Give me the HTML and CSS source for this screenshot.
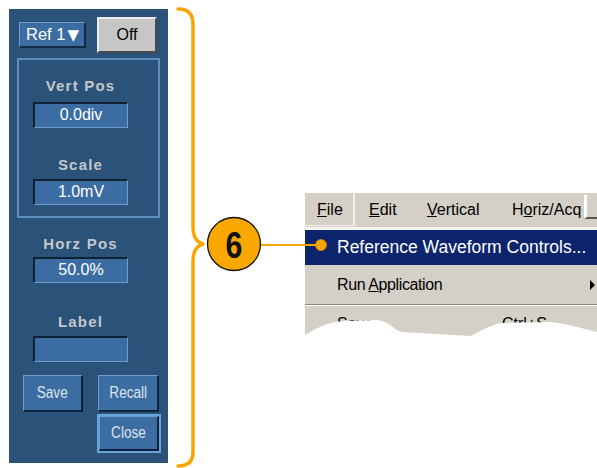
FILE: index.html
```html
<!DOCTYPE html>
<html lang="en">
<head>
    <meta charset="UTF-8">
    <title>Reference Waveform Controls</title>
    <link rel="stylesheet" href="styles.css">
</head>
<body>

<div class="page">
    <!-- Ref waveform side panel -->
    <div class="panel">
        <div class="top-row">
            <div class="ref-btn">Ref 1<span class="ref-arrow">▼</span></div>
            <div class="off-btn">Off</div>
        </div>

        <div class="group">
            <div class="field-label">Vert Pos</div>
            <div class="value-box">0.0div</div>
            <div class="field-label scale-label">Scale</div>
            <div class="value-box scale-box">1.0mV</div>
        </div>

        <div class="field-label horz-label">Horz Pos</div>
        <div class="value-box horz-box">50.0%</div>

        <div class="field-label name-label">Label</div>
        <div class="value-box name-box"></div>

        <div class="btn-row">
            <div class="blue-btn"><span>Save</span></div>
            <div class="blue-btn recall"><span>Recall</span></div>
        </div>
        <div class="close-ring">
            <div class="blue-btn close"><span>Close</span></div>
        </div>
    </div>

    <!-- brace + callout -->
    <svg class="callout" width="137" height="468" viewBox="0 0 137 468">
        <path d="M10 9 C19 9 25 13 25 24 L25 226 C25 238 29 243 36 244 C29 245 25 250 25 262 L25 452 C25 462 19 466 10 466"
              fill="none" stroke="#f7a600" stroke-width="3.5" stroke-linecap="round"/>
        <line x1="92" y1="245" x2="137" y2="245" stroke="#f7a600" stroke-width="2"/>
        <circle cx="66" cy="244" r="26.5" fill="#f9a800" stroke="#111" stroke-width="1.3"/>
        <text x="66" y="258" text-anchor="middle" class="step-num" transform="translate(66 0) scale(0.82 1) translate(-66 0)">6</text>
    </svg>

    <!-- menu screenshot -->
    <div class="menu-shot">
        <div class="menubar">
            <div class="menu-item file"><u>F</u>ile</div>
            <div class="menu-item edit"><u>E</u>dit</div>
            <div class="menu-item vert"><u>V</u>ertical</div>
            <div class="menu-item horiz">H<u>o</u>riz/Acq</div>
            <div class="menu-edge"></div>
        </div>
        <div class="dropdown">
            <div class="dd-row active">Reference Waveform Controls...</div>
            <div class="dd-row run">Run <u>A</u>pplication<span class="sub-arrow"></span></div>
            <div class="dd-sep"></div>
            <div class="dd-row save">Save<span class="shortcut">Ctrl+S</span></div>
        </div>

        <svg class="dot" width="30" height="14" viewBox="0 0 30 14">
            <line x1="0" y1="7" x2="16" y2="7" stroke="#f7a600" stroke-width="2"/>
            <circle cx="16" cy="7" r="5.5" fill="#f7a600" stroke="#e08a00" stroke-width="0.8"/>
        </svg>

        <svg class="torn" width="292" height="26" viewBox="0 0 292 26">
            <path d="M0 23 C10 17 22 10 38 9 L72 8 C84 9 88 17 96 20 L166 24 C172 21 182 14 196 11 L246 10 C262 12 276 16 292 20 L292 26 L0 26 Z" fill="#fff"/>
        </svg>
    </div>
</div>

</body>
</html>
```

FILE: styles.css
```css
body {
    margin: 0;
    background-color: #fff;
    font-family: "Liberation Sans", Arial, sans-serif;
}
.page {
    display: flex;
    align-items: flex-start;
    width: 597px;
    height: 468px;
    overflow: hidden;
}

/* side panel */
.panel {
    width: 159px;
    height: 454px;
    margin: 9px 0 0 9px;
    padding: 8px 0 0 8px;
    box-sizing: border-box;
    background-color: #2b5279;
    flex-shrink: 0;
}
.top-row {
    display: flex;
    align-items: center;
    height: 36px;
}
.ref-btn {
    margin-left: 2px;
    width: 67px;
    height: 26px;
    box-sizing: border-box;
    background-color: #3b6ca2;
    border-top: 1px solid #6f9ccc;
    border-left: 1px solid #6f9ccc;
    border-right: 2px solid #142a42;
    border-bottom: 2px solid #142a42;
    color: #fff;
    font-size: 16.5px;
    line-height: 23px;
    padding-left: 6px;
    white-space: nowrap;
}
.ref-arrow {
    font-family: "DejaVu Sans", sans-serif;
    font-size: 15px;
    margin-left: 2px;
}
.off-btn {
    margin-left: 11px;
    width: 60px;
    height: 36px;
    box-sizing: border-box;
    background-color: #c6c6c6;
    border-top: 2px solid #ececec;
    border-left: 2px solid #ececec;
    border-right: 2px solid #4a4a4a;
    border-bottom: 2px solid #4a4a4a;
    color: #000;
    font-size: 16px;
    line-height: 32px;
    text-align: center;
}
.group {
    margin-top: 5px;
    width: 143px;
    height: 160px;
    box-sizing: border-box;
    border: 2px solid #5c8ec2;
    padding: 18px 0 0 14px;
}
.field-label {
    width: 95px;
    height: 16px;
    line-height: 16px;
    text-align: center;
    font-size: 15px;
    font-weight: bold;
    letter-spacing: 1.2px;
    color: #c3c7cb;
}
.value-box {
    width: 95px;
    height: 26px;
    box-sizing: border-box;
    margin-top: 8px;
    background-color: #3b6ca2;
    border-top: 2px solid #0f2134;
    border-left: 2px solid #0f2134;
    border-right: 1px solid #6f9ccc;
    border-bottom: 1px solid #6f9ccc;
    color: #fff;
    font-size: 16px;
    line-height: 22px;
    text-align: center;
}
.scale-label {
    margin-top: 29px;
}
.scale-box {
    margin-top: 6px;
}
.horz-label,
.horz-box,
.name-label,
.name-box {
    margin-left: 16px;
}
.horz-label {
    margin-top: 18px;
}
.horz-box {
    margin-top: 5px;
}
.name-label {
    margin-top: 31px;
}
.name-box {
    margin-top: 6px;
}
.btn-row {
    display: flex;
    gap: 15px;
    margin: 13px 0 0 6px;
}
.blue-btn {
    width: 60px;
    height: 37px;
    box-sizing: border-box;
    background-color: #3b6ca2;
    border-top: 1px solid #6f9ccc;
    border-left: 1px solid #6f9ccc;
    border-right: 2px solid #10223a;
    border-bottom: 2px solid #10223a;
    color: #dde4ec;
    font-size: 16px;
    display: flex;
    align-items: center;
    justify-content: center;
}
.blue-btn span {
    display: inline-block;
    transform: scaleX(0.85);
}
.recall {
    width: 61px;
}
.close-ring {
    margin: 2px 0 0 80px;
    width: 64px;
    height: 39px;
    box-sizing: border-box;
    border: 2px solid #6aa3d8;
}
.close {
    width: 60px;
    height: 35px;
}

/* callout */
.callout {
    flex-shrink: 0;
}
.step-num {
    font-family: "Liberation Sans", Arial, sans-serif;
    font-weight: bold;
    font-size: 37px;
    fill: #111;
}

/* menu screenshot */
.menu-shot {
    position: relative;
    margin-top: 193px;
    width: 292px;
    height: 145px;
    flex-shrink: 0;
    overflow: hidden;
    background-color: #d4d0c8;
    font-size: 16px;
    color: #000;
}
.menubar {
    display: flex;
    height: 33px;
}
.menu-item {
    box-sizing: border-box;
    height: 33px;
    line-height: 33px;
    padding-left: 14px;
    white-space: nowrap;
}
.menu-item.file {
    width: 50px;
    padding-left: 12px;
    border-right: 2px solid #f2f1ec;
    border-bottom: 1px solid #f2f1ec;
}
.menu-item.edit {
    width: 58px;
}
.menu-item.vert {
    width: 85px;
}
.menu-item.horiz {
    width: 86px;
}
.menu-edge {
    flex: 1;
    margin-top: 2px;
    height: 22px;
    border-left: 3px solid #fff;
    border-bottom: 2px solid #555;
}
.dropdown {
    border-top: 3px solid #f4f3ee;
    margin-top: 1px;
}
.dd-row {
    position: relative;
    padding-left: 32px;
    white-space: nowrap;
}
.dd-row.active {
    height: 35px;
    line-height: 35px;
    background-color: #0b246b;
    color: #fff;
    font-size: 17.5px;
}
.dd-row.run {
    height: 39px;
    line-height: 39px;
    letter-spacing: -0.4px;
}
.sub-arrow {
    position: absolute;
    right: 2px;
    top: 15px;
    width: 0;
    height: 0;
    border-top: 5px solid transparent;
    border-bottom: 5px solid transparent;
    border-left: 5px solid #000;
}
.dd-sep {
    height: 1px;
    background-color: #8d8a84;
    border-bottom: 1px solid #fff;
}
.dd-row.save {
    padding-top: 8px;
    line-height: 20px;
}
.shortcut {
    position: absolute;
    left: 197px;
    top: 8px;
}
.dot {
    position: absolute;
    left: 0;
    top: 45px;
}
.torn {
    position: absolute;
    left: 0;
    bottom: 0;
}
```
